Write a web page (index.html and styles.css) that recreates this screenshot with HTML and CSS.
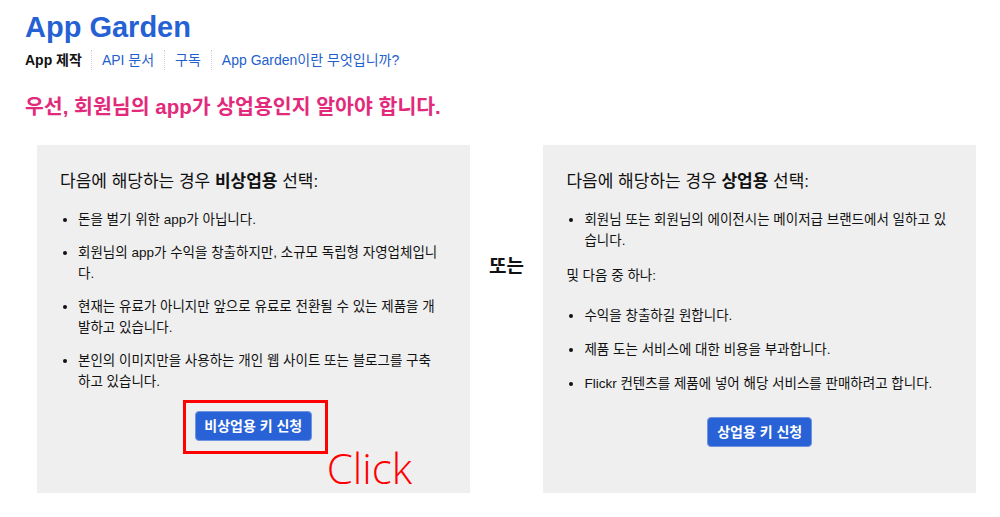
FILE: index.html
```html
<!DOCTYPE html>
<html lang="ko">
<head>
<meta charset="utf-8">
<link rel="stylesheet" href="styles.css">
</head>
<body>
<div class="page">
  <h1 class="title">App Garden</h1>
  <nav class="nav">
    <span class="nav-item current">App 제작</span>
    <span class="nav-item">API 문서</span>
    <span class="nav-item">구독</span>
    <span class="nav-item">App Garden이란 무엇입니까?</span>
  </nav>
  <h2 class="lead">우선, 회원님의 app가 상업용인지 알아야 합니다.</h2>
  <div class="choices">
    <section class="box">
      <h3 class="box-head">다음에 해당하는 경우 <b>비상업용</b> 선택:</h3>
      <ul class="list">
        <li>돈을 벌기 위한 app가 아닙니다.</li>
        <li>회원님의 app가 수익을 창출하지만, 소규모 독립형 자영업체입니다.</li>
        <li>현재는 유료가 아니지만 앞으로 유료로 전환될 수 있는 제품을 개발하고 있습니다.</li>
        <li>본인의 이미지만을 사용하는 개인 웹 사이트 또는 블로그를 구축하고 있습니다.</li>
      </ul>
      <div class="btn-row">
        <span class="btn-wrap">
          <a class="btn btn-left">비상업용 키 신청</a>
          <span class="mark"></span>
          <span class="click">Click</span>
        </span>
      </div>
    </section>
    <div class="or">또는</div>
    <section class="box">
      <h3 class="box-head">다음에 해당하는 경우 <b>상업용</b> 선택:</h3>
      <ul class="list">
        <li>회원님 또는 회원님의 에이전시는 메이저급 브랜드에서 일하고 있습니다.</li>
      </ul>
      <p class="and">및 다음 중 하나:</p>
      <ul class="list list2">
        <li>수익을 창출하길 원합니다.</li>
        <li>제품 도는 서비스에 대한 비용을 부과합니다.</li>
        <li>Flickr 컨텐츠를 제품에 넣어 해당 서비스를 판매하려고 합니다.</li>
      </ul>
      <div class="btn-row btn-row2">
        <a class="btn">상업용 키 신청</a>
      </div>
    </section>
  </div>
</div>
</body>
</html>
```
FILE: styles.css
```css
* { box-sizing: border-box; }
html, body { margin: 0; padding: 0; background: #fff; }
body {
  font-family: "Liberation Sans", "Noto Sans CJK KR", Arial, sans-serif;
  color: #111;
}
.page { padding: 9px 0 0 25px; width: 1000px; }
.title {
  margin: 0;
  font-size: 29px;
  line-height: 36px;
  font-weight: bold;
  color: #2561d4;
}
.nav {
  display: flex;
  align-items: center;
  margin-top: 5px;
  font-size: 14px;
  line-height: 20px;
}
.nav-item {
  color: #1f5fce;
  padding: 0 10px;
  border-left: 1px dotted #cfcfcf;
}
.nav-item:first-child { padding-left: 0; padding-right: 9px; border-left: none; }
.nav-item.current { color: #111; font-weight: bold; }
.lead {
  margin: 24px 0 0 0;
  font-size: 20.5px;
  line-height: 26px;
  font-weight: bold;
  color: #e2297b;
}
.choices {
  display: flex;
  align-items: stretch;
  margin: 25px 0 0 12px;
  width: 939px;
}
.box {
  width: 433px;
  height: 348px;
  background: #efefef;
  padding: 25px 27px 0 23px;
}
.box-head {
  margin: 0;
  font-size: 17px;
  line-height: 24px;
  font-weight: normal;
}
.box-head b { font-weight: bold; }
.list {
  margin: 15px 0 0 0;
  padding: 0 0 0 18px;
  font-size: 13.5px;
  line-height: 21px;
}
.list li { margin-bottom: 12px; padding-left: 0; }
.list li:last-child { margin-bottom: 0; }
.and {
  margin: 14px 0 0 0;
  font-size: 13.5px;
  line-height: 21px;
}
.list2 { margin-top: 19px; }
.list2 li { margin-bottom: 13px; }
.or {
  width: 74px;
  display: flex;
  align-items: center;
  justify-content: center;
  font-size: 19px;
  font-weight: bold;
  padding-bottom: 110px;
}
.btn-row {
  display: flex;
  justify-content: center;
  margin-top: 19px;
  padding-left: 4px;
}
.btn-row2 { margin-top: 23px; }
.btn-wrap { position: relative; display: inline-block; }
.btn {
  display: inline-block;
  background: #2862d6;
  color: #fff;
  font-weight: bold;
  font-size: 14px;
  line-height: 28px;
  padding: 0 9px;
  border: 1px solid #6f95e0;
  border-radius: 4px;
}
.btn-left { width: 117px; text-align: center; padding: 0; height: 30px; }
.mark {
  position: absolute;
  left: -12px;
  top: -11px;
  width: 145px;
  height: 54px;
  border: 3px solid #ff0000;
}
.click {
  position: absolute;
  left: 132px;
  top: 32px;
  font-family: "Open Sans", "Liberation Sans", sans-serif;
  font-weight: 300;
  font-size: 42px;
  line-height: 50px;
  color: #ff0000;
  white-space: nowrap;
}
```
